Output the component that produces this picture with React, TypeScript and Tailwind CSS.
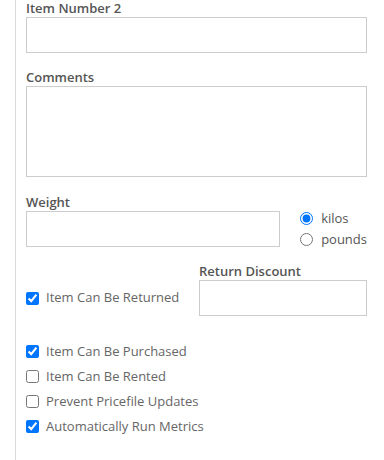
import React from 'react';

const labelCls = "block text-[13px] leading-[17px] font-semibold text-[#555]";
const inputCls = "block w-full h-[36px] border border-[#ccc] bg-white outline-none";

const CheckRow: React.FC<{ label: string; checked?: boolean }> = ({ label, checked }) => {
  const [on, setOn] = React.useState(!!checked);
  return (
    <label className="flex items-center h-[25px] gap-[7px] text-[13px] text-[#666] cursor-pointer">
      <input type="checkbox" checked={on} onChange={() => setOn(!on)} className="m-0 w-[13px] h-[13px]" />
      <span>{label}</span>
    </label>
  );
};

export default function App() {
  const [unit, setUnit] = React.useState<'kilos' | 'pounds'>('kilos');

  return (
    <div className="w-[384px] h-[460px] bg-white overflow-hidden" style={{ fontFamily: '"Open Sans", sans-serif' }}>
      <div className="ml-[15px] h-full border-l border-[#d9d9d9] pl-[10px] pr-[17px]">
        {/* Item number */}
        <label className={labelCls}>Item Number 2</label>
        <input type="text" className={inputCls} />

        {/* Comments */}
        <label className={`${labelCls} mt-[16px]`}>Comments</label>
        <textarea className="block w-full h-[91px] border border-[#ccc] resize-none outline-none" />

        {/* Weight */}
        <label className={`${labelCls} mt-[17px]`}>Weight</label>
        <div className="flex items-start h-[36px]">
          <input type="text" className="block w-[255px] h-[36px] border border-[#ccc] outline-none" />
          <div className="ml-[20px] -mt-[3px] flex flex-col text-[13px] text-[#555]">
            <label className="flex items-center h-[21px] gap-[8px] cursor-pointer">
              <input type="radio" name="unit" checked={unit === 'kilos'} onChange={() => setUnit('kilos')} className="m-0 w-[13px] h-[13px]" />
              <span>kilos</span>
            </label>
            <label className="flex items-center h-[21px] gap-[8px] cursor-pointer">
              <input type="radio" name="unit" checked={unit === 'pounds'} onChange={() => setUnit('pounds')} className="m-0 w-[13px] h-[13px]" />
              <span>pounds</span>
            </label>
          </div>
        </div>

        {/* Returns */}
        <div className="flex items-end mt-[16px]">
          <div className="w-[173px] h-[36px] flex items-center">
            <CheckRow label="Item Can Be Returned" checked />
          </div>
          <div className="flex-1">
            <label className={labelCls}>Return Discount</label>
            <input type="text" className={inputCls} />
          </div>
        </div>

        <div className="mt-[23px] flex flex-col">
          <CheckRow label="Item Can Be Purchased" checked />
          <CheckRow label="Item Can Be Rented" />
          <CheckRow label="Prevent Pricefile Updates" />
          <CheckRow label="Automatically Run Metrics" checked />
        </div>
      </div>
    </div>
  );
}
